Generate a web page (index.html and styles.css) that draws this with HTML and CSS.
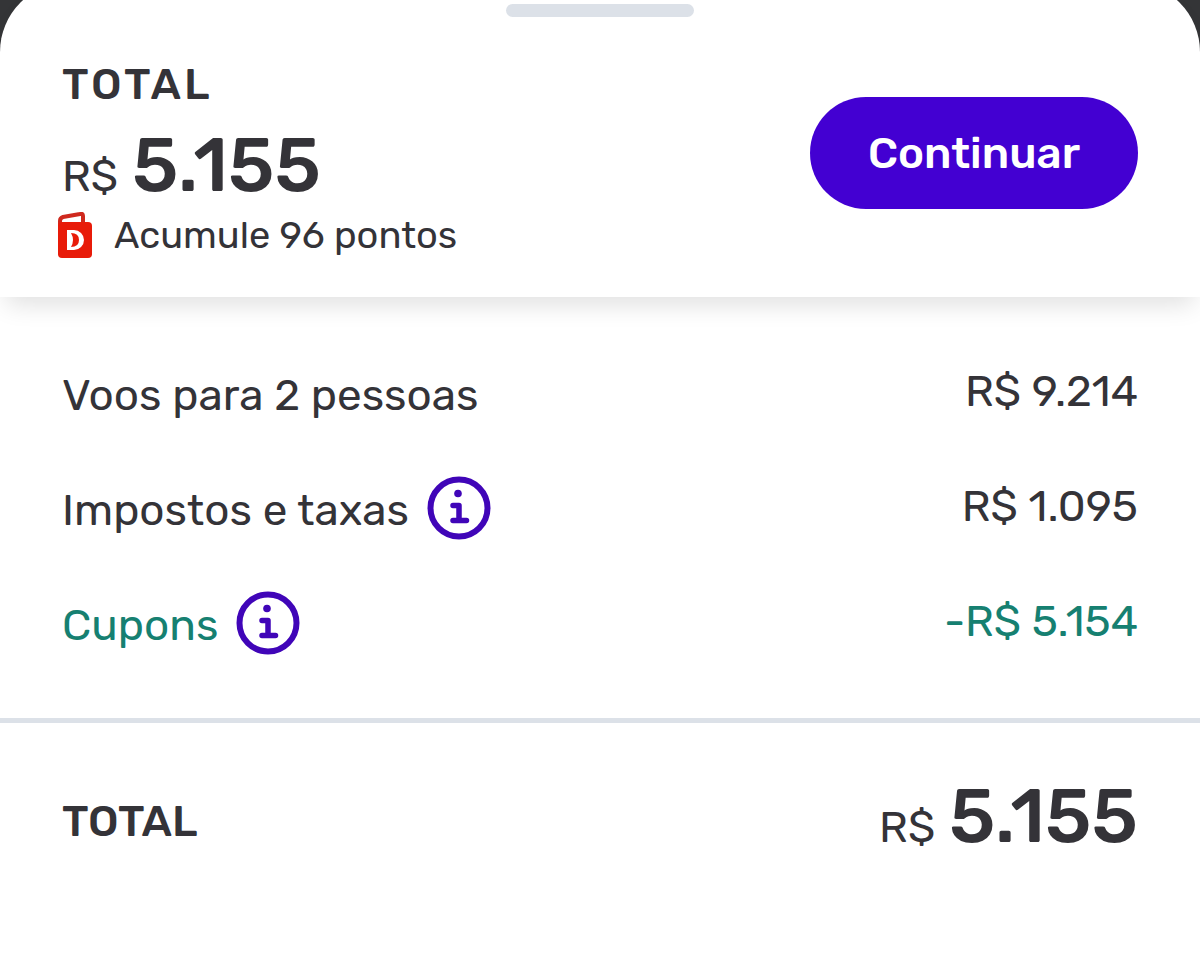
FILE: index.html
```
<!DOCTYPE html>
<html lang="pt-BR">
<head>
<meta charset="UTF-8">
<meta name="viewport" content="width=device-width, initial-scale=1.0">
<title>Total da compra</title>
<link rel="stylesheet" href="styles.css">
</head>
<body>
<main class="sheet">
  <header class="summary">
    <div class="handle"></div>
    <div class="summary-info">
      <h1 class="summary-title">TOTAL</h1>
      <p class="price"><span class="currency">R$</span> <strong>5.155</strong></p>
      <p class="points">
        <svg class="points-icon" viewBox="0 0 34 46" aria-hidden="true">
          <path d="M2 14V9q0-3 3-4L22 2q3-1 3 2v8" fill="none" stroke="#cf291e" stroke-width="4"/>
          <rect y="10" width="34" height="36" rx="4" fill="#e81b09"/>
          <path d="M4 10L23 7v3z" fill="#fff"/>
          <path d="M9 18h7a10 10 0 0 1 0 20H9z" fill="#fff"/>
          <path d="M13 21q8 0 8 7t-8 7q4-7 0-14z" fill="#e81b09"/>
        </svg>
        <span>Acumule 96 pontos</span>
      </p>
    </div>
    <button type="button" class="continue">Continuar</button>
  </header>
  <dl class="details">
    <div class="row">
      <dt><span>Voos para 2 pessoas</span></dt>
      <dd>R$ 9.214</dd>
    </div>
    <div class="row">
      <dt>
        <span>Impostos e taxas</span>
        <button type="button" class="info" aria-label="Sobre impostos e taxas">
          <svg viewBox="0 0 64 64" aria-hidden="true">
            <circle cx="32" cy="32" r="28.5" fill="none" stroke="currentColor" stroke-width="6"/>
            <circle cx="31" cy="17.5" r="3.8" fill="currentColor"/>
            <path d="M26 29.5h6v15M26 44.500h13.500" fill="none" stroke="currentColor" stroke-width="5.500" stroke-linecap="round" stroke-linejoin="round"/>
          </svg>
        </button>
      </dt>
      <dd>R$ 1.095</dd>
    </div>
    <div class="row discount">
      <dt>
        <span>Cupons</span>
        <button type="button" class="info" aria-label="Sobre cupons">
          <svg viewBox="0 0 64 64" aria-hidden="true">
            <circle cx="32" cy="32" r="28.5" fill="none" stroke="currentColor" stroke-width="6"/>
            <circle cx="31" cy="17.5" r="3.8" fill="currentColor"/>
            <path d="M26 29.5h6v15M26 44.500h13.500" fill="none" stroke="currentColor" stroke-width="5.500" stroke-linecap="round" stroke-linejoin="round"/>
          </svg>
        </button>
      </dt>
      <dd>-R$ 5.154</dd>
    </div>
  </dl>
  <footer class="total">
    <h2>TOTAL</h2>
    <p class="price"><span class="currency">R$</span> <strong>5.155</strong></p>
  </footer>
</main>
</body>
</html>
```
FILE: styles.css
```
:root{--text:#343338;--primary:#4300d2;--icon:#4005b8;--green:#168071;--line:#dce1e8}
*{box-sizing:border-box;margin:0;padding:0}
body{background:#343537;color:var(--text);font-family:Rubik,Inter,sans-serif;font-size:44px;line-height:48px;overflow:hidden}
button{font:inherit;border:none;cursor:pointer}

/* the top edge of the sheet is scrolled slightly out of view */
.sheet{min-height:calc(100vh + 18px);margin-top:-18px;background:#fff;border-radius:70px 70px 0 0}

.summary{position:relative;display:flex;justify-content:space-between;align-items:flex-start;padding:78px 62px 39px;box-shadow:0 14px 24px -6px rgba(0,0,0,0.12);border-radius:70px 70px 0 0}
.handle{position:absolute;top:22px;left:50%;width:188px;height:13px;margin-left:-94px;border-radius:7px;background:var(--line)}
.summary-title{margin-bottom:18px;font-size:44px;font-weight:500;letter-spacing:3px}
.price{display:flex;align-items:baseline;gap:14px;white-space:nowrap}
.price strong{font-size:75px;font-weight:500;line-height:80px}
.points{display:flex;align-items:center;gap:22px;margin-top:6px;margin-left:-4px;font-size:38px;line-height:46px}
.points-icon{width:34px;height:46px}
.continue{margin-top:37px;padding:32px 58px;border-radius:57px;background:var(--primary);color:#fff;font-weight:500}

.details{display:flex;flex-direction:column;gap:51px;padding:64px 62px 63px;border-bottom:5px solid var(--line)}
.row{display:flex;justify-content:space-between;align-items:center;height:64px}
.row dt{display:flex;align-items:center;gap:18px}
.row dt span{padding-top:4px}
.row dd{padding-bottom:4px}
.info{width:64px;height:64px;background:none;color:var(--icon)}
.info svg{display:block}
.discount{color:var(--green)}

.total{display:flex;justify-content:space-between;align-items:center;padding:54px 62px 64px}
.total h2{padding-top:8px;font-size:44px;font-weight:500}
```
